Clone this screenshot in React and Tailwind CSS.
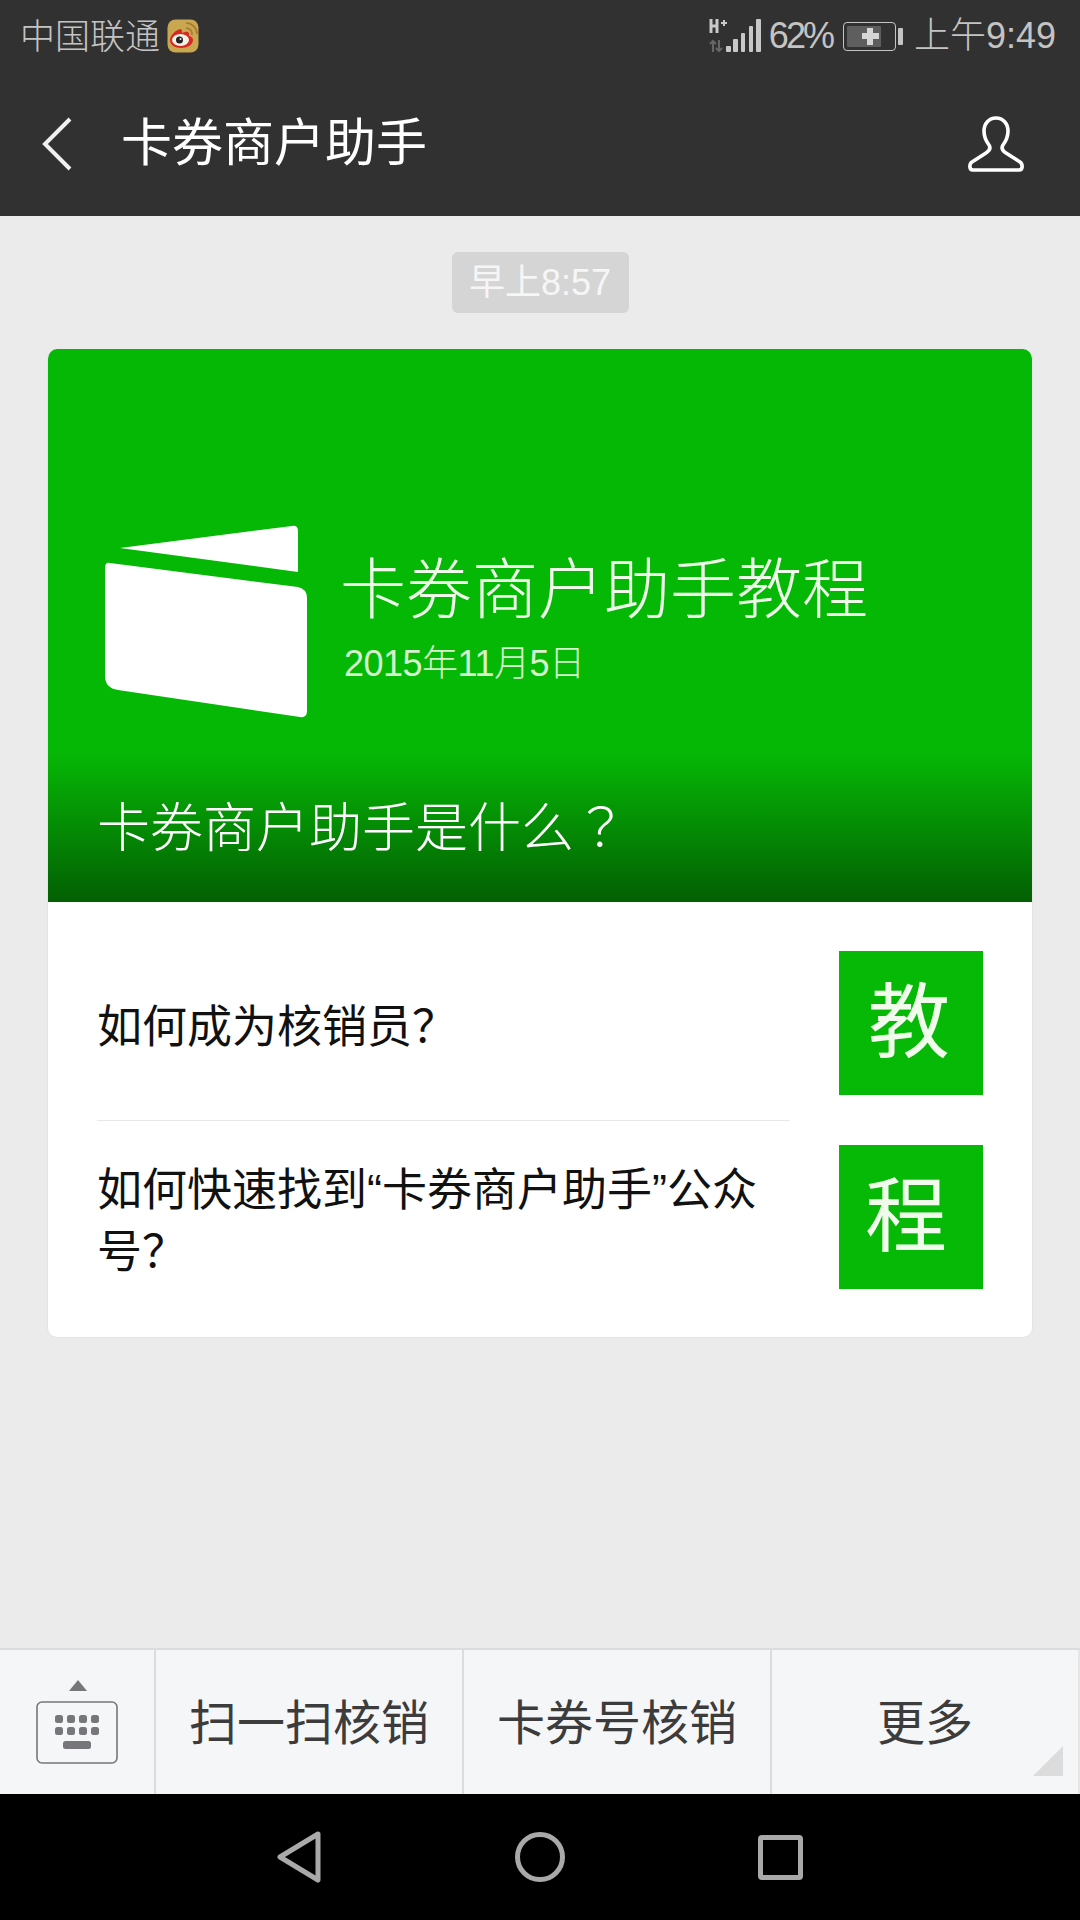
const CJK = "font-['Liberation_Sans','Noto_Sans_CJK_SC',sans-serif]";

function Weibo() {
    return (
        <svg viewBox="0 0 32 34" className="w-[32px] h-[34px] ml-[7px]">
            <rect x="0.5" y="0.5" width="31" height="33" rx="8" fill="#c9a650" />
            <path d="M14 10C8 11 3 17 3 21c0 5 5 8 11 8s12-3 12-8c0-3-3-4-4-4 1-3-1-5-4-4-2 1-3 1-3 0 0-2-1-3-1-3z" fill="#d8281f" />
            <ellipse cx="13.5" cy="21" rx="8.5" ry="6" fill="#f6f1e6" />
            <circle cx="12.5" cy="21" r="3.5" fill="#222" />
            <circle cx="13.5" cy="20" r="1" fill="#eee" />
            <path d="M19 9a6 6 0 0 1 6 7M19 4a11 11 0 0 1 11 11" fill="none" stroke="#a8752e" strokeWidth="1.6" />
        </svg>
    );
}

function Signal() {
    return (
        <svg viewBox="0 0 54 36" className="w-[54px] h-[36px]">
            <path d="M2 1v14M8 1v14M2 8h6" fill="none" stroke="#c8c8c8" strokeWidth="3" />
            <path d="M12 5h6M15 2v6" fill="none" stroke="#c8c8c8" strokeWidth="2" />
            <path d="M4 34V23M1 26l3-3 3 3M10 22v11M7 30l3 3 3-3" fill="none" stroke="#666" strokeWidth="2" />
            <rect x="17" y="28" width="5" height="6" rx="1" fill="#c8c8c8" />
            <rect x="24" y="21" width="5" height="13" rx="1" fill="#c8c8c8" />
            <rect x="32" y="15" width="4" height="19" rx="1" fill="#c8c8c8" />
            <rect x="40" y="8" width="4" height="26" rx="1" fill="#c8c8c8" />
            <rect x="47" y="1" width="5" height="33" rx="1" fill="#c8c8c8" />
        </svg>
    );
}

function Battery() {
    return (
        <div className="flex items-center gap-[2px]">
            <div className="relative w-[53px] h-[29px] rounded-[4px] border border-[#c4c4c4] p-[3px]">
                <div className="h-full w-[75%] bg-[#5e5e5e] rounded-[1px]" />
                <span className="absolute left-[18px] top-[5px] w-[17px] h-[17px] flex items-center justify-center">
                    <span className="absolute w-[17px] h-[6px] bg-[#d6d6d6]" />
                    <span className="absolute w-[6px] h-[17px] bg-[#d6d6d6]" />
                </span>
            </div>
            <div className="w-[5px] h-[17px] bg-[#c4c4c4] rounded-[1px]" />
        </div>
    );
}

function Row({ text, char, first }) {
    return (
        <div className="flex items-stretch pl-[49px] pr-[49px]">
            <div className={`flex-1 flex items-center pr-[30px] mr-[49px] min-w-0 ${first ? "border-b border-[#e8e8e8] pt-[33px]" : "pb-[15px]"}`}>
                <p className="text-[45px] leading-[62px] text-[#111]">{text}</p>
            </div>
            <div className={first ? "pt-[49px] pb-[26px]" : "pt-[24px] pb-[48px]"}>
                <div className={`w-[144px] h-[144px] bg-[#07b907] flex items-center justify-center text-[#f0fbec] text-[82px] leading-none ${first ? "pr-[4px]" : "pr-[10px]"}`}>
                    {char}
                </div>
            </div>
        </div>
    );
}

export default function App() {
    return (
        <div className={`w-[1080px] h-[1920px] bg-[#ebebeb] flex flex-col overflow-hidden ${CJK}`}>
            <div className="h-[216px] shrink-0 bg-[#323132] flex flex-col">
                <div className="h-[72px] pl-[20px] pr-[24px] flex items-center justify-between text-[#c4c4c4]">
                    <div className="flex items-center">
                        <span className="text-[35px] leading-none font-light">中国联通</span>
                        <Weibo />
                    </div>
                    <div className="flex items-center">
                        <Signal />
                        <span className="text-[36px] leading-none ml-[6px] mr-[11px] tracking-[-3px]">62%</span>
                        <Battery />
                        <span className="text-[36px] leading-none ml-[11px] font-light whitespace-nowrap">上午9:49</span>
                    </div>
                </div>
                <div className="flex-1 flex items-center pl-[42px] pr-[55px] pb-[1px]">
                    <svg viewBox="0 0 30 54" className="w-[30px] h-[54px]" fill="none" stroke="#f0f0f0" strokeWidth="4">
                        <path d="M28 2 L3 27 L28 52" />
                    </svg>
                    <span className="ml-[49px] text-[51px] leading-none text-white">卡券商户助手</span>
                    <svg viewBox="0 0 58 56" className="w-[58px] h-[56px] ml-auto" fill="none" stroke="#fff" strokeWidth="3.6" strokeLinejoin="round">
                        <path d="M29 2c-7 0-12 5.500-12 13 0 6 2 10 5 14 2 3 0 6-3 8L5 46c-3 2-3 8 1 8h46c4 0 4-6 1-8l-14-9c-3-2-5-5-3-8 3-4 5-8 5-14 0-7.500-5-13-12-13z" />
                    </svg>
                </div>
            </div>

            <div className="flex justify-center pt-[36px] pb-[36px]">
                <div className="h-[61px] w-[177px] rounded-[6px] bg-[#d5d5d5] text-[#f6f6f6] text-[36px] flex items-center justify-center whitespace-nowrap">
                    早上8:57
                </div>
            </div>

            <div className="mx-[47px] rounded-[10px] overflow-hidden bg-white border border-[#e4e4e4] border-t-0">
                <div className="relative h-[553px] bg-[#06b806] text-white pl-[56px] pt-[176px]">
                    <div className="flex items-start">
                        <svg viewBox="0 0 204 193" className="w-[204px] h-[193px]">
                            <path d="M16 23 L188 1 Q194 0 194 6 L194 47 Z" fill="#fff" />
                            <path d="M6 38 L194 62 Q203 64 203 73 L203 186 Q203 193 196 192 L14 165 Q1 163 1 151 L1 43 Q1 37 6 38 Z" fill="#fff" />
                        </svg>
                        <div className="ml-[32px] pt-[27px]">
                            <div className="text-[66px] leading-[76px] font-light text-[#eefbe9] whitespace-nowrap">卡券商户助手教程</div>
                            <div className="text-[36px] leading-[40px] mt-[16px] ml-[4px] font-light text-[#d5f3cc] tracking-[-0.5px] whitespace-nowrap">2015年11月5日</div>
                        </div>
                    </div>
                    <div className="absolute inset-x-0 bottom-0 h-[150px] bg-gradient-to-b from-[#06b80600] to-[#035f03] flex items-end pl-[49px] pb-[42px]">
                        <span className="text-[53px] leading-[62px] font-light text-white whitespace-nowrap">
                            卡券商户助手是什么<span className="font-['Noto_Sans_CJK_TC',sans-serif]">？</span>
                        </span>
                    </div>
                </div>
                <Row text="如何成为核销员？" char="教" first />
                <Row text="如何快速找到“卡券商户助手”公众号？" char="程" />
            </div>

            <div className="flex-1" />

            <div className="h-[146px] shrink-0 bg-[#f5f6f8] border-t-2 border-[#dcdcdc] flex text-[48px] text-[#3c3c3c]">
                <div className="w-[156px] border-r-2 border-[#dcdcdc] flex items-center justify-center">
                    <svg viewBox="0 0 84 84" className="w-[84px] h-[84px] ml-[2px]">
                        <path d="M33 11 L42 0 L51 11 Z" fill="#77777b" />
                        <rect x="1" y="22" width="80" height="61" rx="5" fill="none" stroke="#77777b" strokeWidth="1.6" />
                        {[0, 12, 24, 36].map((dx) => (
                            <g key={dx} fill="#77777b">
                                <rect x={19 + dx} y="35" width="8" height="8" rx="2.5" />
                                <rect x={19 + dx} y="47" width="8" height="8" rx="2.5" />
                            </g>
                        ))}
                        <rect x="27" y="61" width="28" height="8" rx="2.5" fill="#77777b" />
                    </svg>
                </div>
                <div className="w-[308px] border-r-2 border-[#dcdcdc] flex items-center justify-center pt-[3px]">扫一扫核销</div>
                <div className="w-[308px] border-r-2 border-[#dcdcdc] flex items-center justify-center pt-[3px]">卡券号核销</div>
                <div className="relative flex-1 border-r-2 border-[#e6e6e6] flex items-center justify-center pt-[3px]">
                    更多
                    <svg viewBox="0 0 30 30" className="absolute right-[15px] bottom-[18px] w-[30px] h-[30px]">
                        <path d="M0 30 L30 0 V30 Z" fill="#dcdcdc" />
                    </svg>
                </div>
            </div>

            <div className="h-[126px] shrink-0 bg-black flex items-center justify-center">
                <svg viewBox="0 0 44 52" className="w-[44px] h-[52px]" fill="none" stroke="#a9a9a9" strokeWidth="5" strokeLinejoin="round">
                    <path d="M41 3 L3 26 L41 49 Z" />
                </svg>
                <div className="w-[50px] h-[50px] rounded-full border-[5px] border-[#a9a9a9] ml-[194px]" />
                <div className="w-[45px] h-[45px] rounded-[4px] border-[5px] border-[#a9a9a9] ml-[193px]" />
            </div>
        </div>
    );
}
